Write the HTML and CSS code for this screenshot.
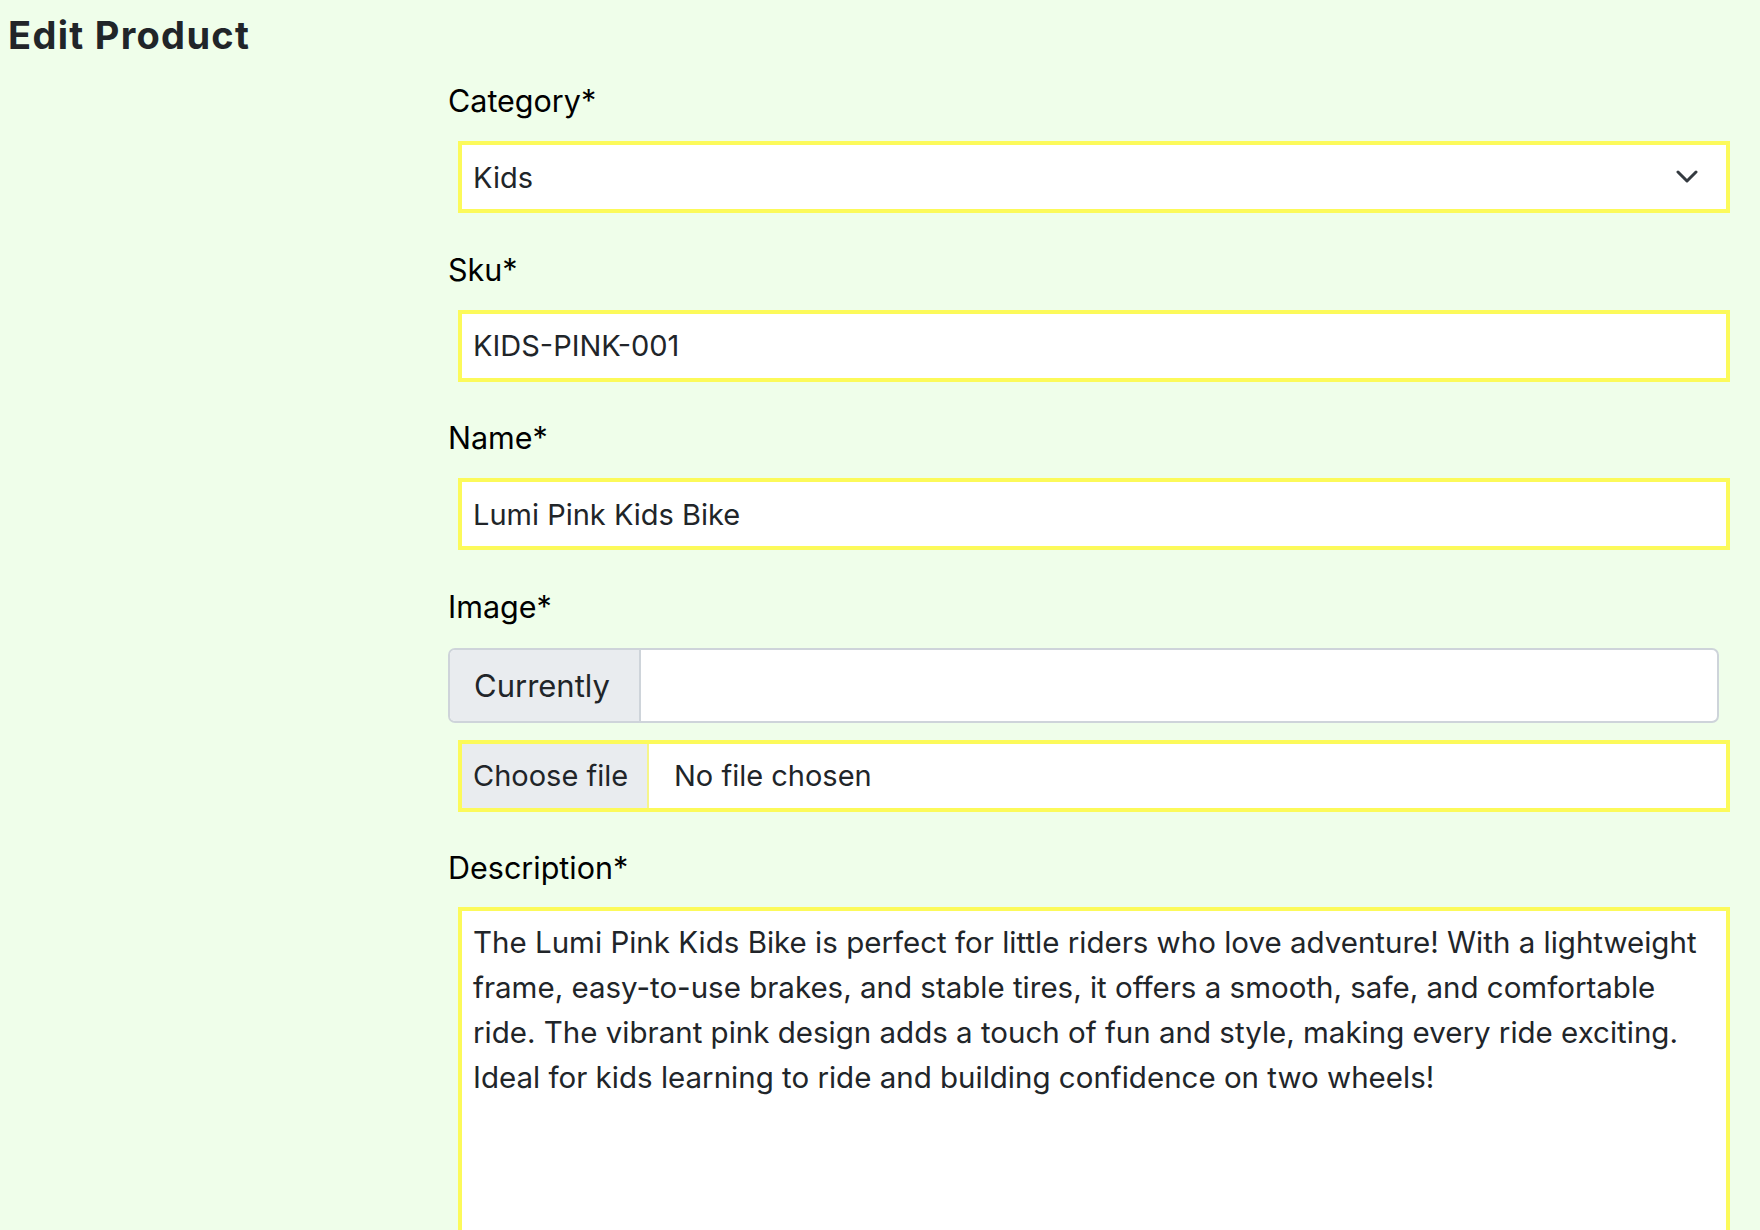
FILE: index.html
```html
<!DOCTYPE html>
<html lang="en">
<head>
<meta charset="utf-8">
<title>Edit Product</title>
<link rel="stylesheet" href="styles.css">
</head>
<body>
<div class="page">
  <h1 class="title">Edit Product</h1>
  <form class="form">
    <div class="field">
      <label class="label" for="category">Category*</label>
      <div class="select-wrap">
        <select id="category" class="control select">
          <option>Kids</option>
        </select>
        <svg class="chevron" width="22" height="13" viewBox="0 0 22 13" aria-hidden="true">
          <path d="M2 2 L11 11 L20 2" fill="none" stroke="#343a40" stroke-width="3" stroke-linecap="round" stroke-linejoin="round"/>
        </svg>
      </div>
    </div>
    <div class="field">
      <label class="label" for="sku">Sku*</label>
      <input id="sku" class="control" type="text" value="KIDS-PINK-001">
    </div>
    <div class="field">
      <label class="label" for="name">Name*</label>
      <input id="name" class="control" type="text" value="Lumi Pink Kids Bike">
    </div>
    <div class="field">
      <label class="label label-image" for="image">Image*</label>
      <div class="input-group">
        <span class="addon">Currently</span>
        <span class="group-body"></span>
      </div>
      <label class="control file-control" for="image">
        <span class="file-btn">Choose file</span>
        <span class="file-name">No file chosen</span>
        <input id="image" class="file-input" type="file">
      </label>
    </div>
    <div class="field">
      <label class="label label-desc" for="description">Description*</label>
      <textarea id="description" class="control textarea">The Lumi Pink Kids Bike is perfect for little riders who love adventure! With a lightweight frame, easy-to-use brakes, and stable tires, it offers a smooth, safe, and comfortable ride. The vibrant pink design adds a touch of fun and style, making every ride exciting. Ideal for kids learning to ride and building confidence on two wheels!</textarea>
    </div>
  </form>
</div>
</body>
</html>
```
FILE: styles.css
```css
html, body {
  margin: 0;
  padding: 0;
  background: #effeea;
}
body {
  font-family: Inter, "Noto Sans", sans-serif;
  color: #212529;
  overflow: hidden;
}
.page {
  padding: 14px 0 0 8px;
}
.title {
  margin: 0 0 21px 0;
  font-size: 38px;
  line-height: 43px;
  font-weight: 700;
  color: #212529;
  letter-spacing: 1.3px;
}
.form {
  margin-left: 440px;
  width: 1271px;
}
.field {
  margin-bottom: 33.5px;
}
.label {
  display: block;
  font-size: 30.5px;
  line-height: 45px;
  color: #000;
  margin-bottom: 18px;
}
.label-image {
  margin-bottom: 19px;
}
.label-desc {
  margin-bottom: 17px;
}
.control {
  display: block;
  box-sizing: border-box;
  width: 1272px;
  height: 72px;
  margin: 0 0 0 10px;
  padding: 0 11px;
  border: 4px solid #fcfa5a;
  border-radius: 0;
  background: #fff;
  font-family: inherit;
  font-size: 29px;
  line-height: 45px;
  color: #212529;
  outline: none;
}
.select-wrap {
  position: relative;
}
.select {
  appearance: none;
  -webkit-appearance: none;
}
.chevron {
  position: absolute;
  left: 1228px;
  top: 29px;
  pointer-events: none;
}
.input-group {
  display: flex;
  box-sizing: border-box;
  height: 75px;
  border: 2px solid #ced4da;
  border-radius: 7px;
  overflow: hidden;
  background: #fff;
  margin-bottom: 17px;
}
.addon {
  display: flex;
  align-items: center;
  padding: 0 24px;
  width: 141px;
  background: #e9ecef;
  border-right: 2px solid #ced4da;
  font-size: 31px;
  color: #212529;
}
.group-body {
  flex: 1;
}
.file-control {
  display: flex;
  align-items: stretch;
  padding: 0;
  cursor: pointer;
}
.file-btn {
  display: flex;
  align-items: center;
  box-sizing: border-box;
  width: 187px;
  padding-left: 11px;
  background: #e9ecef;
  border-right: 2px solid #f6f58a;
}
.file-name {
  display: flex;
  align-items: center;
  margin-left: 25px;
}
.file-input {
  display: none;
}
.textarea {
  height: 420px;
  padding: 9px 11px;
  font-size: 29.5px;
  resize: none;
}
```
